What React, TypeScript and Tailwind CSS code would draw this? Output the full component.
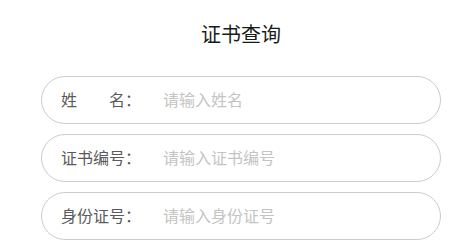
import React from 'react'

const fields = [
  { label: '姓　　名：', placeholder: '请输入姓名' },
  { label: '证书编号：', placeholder: '请输入证书编号' },
  { label: '身份证号：', placeholder: '请输入身份证号' },
]

export default function App() {
  return (
    <div
      className="w-[468px] h-[251px] bg-white overflow-hidden"
      style={{ fontFamily: '"Noto Sans CJK SC", "Microsoft YaHei", sans-serif' }}
    >
      <div className="w-[400px] ml-[41px] flex flex-col">
        <h1 className="mt-[20px] h-[28px] text-[20px] leading-[28px] text-center text-[#1a1a1a] font-normal">
          证书查询
        </h1>
        <div className="mt-[28px] flex flex-col gap-[10px]">
          {fields.map((f) => (
            <div
              key={f.placeholder}
              className="h-[48px] rounded-full border border-[#cccccc] flex items-center pl-[19px] pr-6"
            >
              <span className="w-[102px] shrink-0 text-[16px] leading-[20px] -mt-[2px] text-[#5a5a5a] whitespace-pre">{f.label}</span>
              <input
                className="flex-1 min-w-0 -mt-[2px] outline-none text-[16px] text-[#333] placeholder:text-[#c4c4c4] bg-transparent"
                placeholder={f.placeholder}
              />
            </div>
          ))}
        </div>
      </div>
    </div>
  )
}
